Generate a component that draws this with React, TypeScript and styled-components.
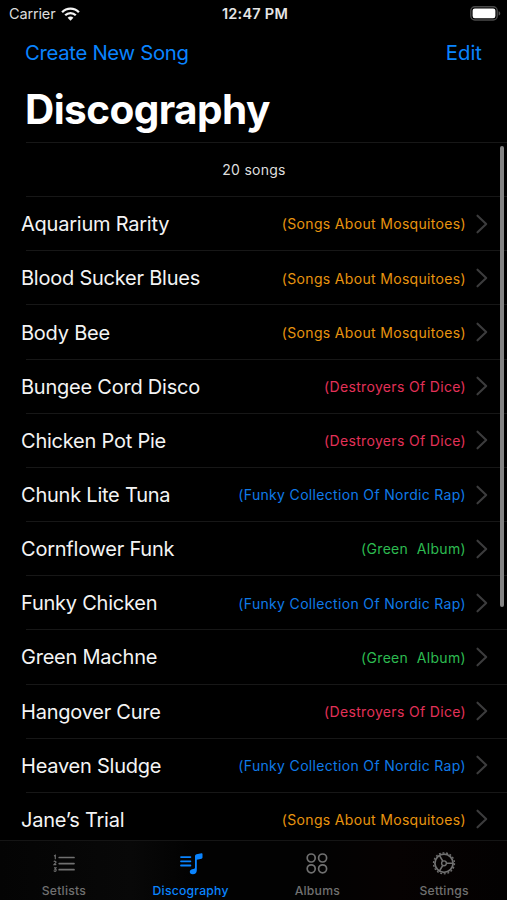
import React from "react";
import styled, { createGlobalStyle } from "styled-components";

const GlobalStyle = createGlobalStyle`
  *, *::before, *::after { box-sizing: border-box; }
  html, body { margin: 0; background: #000; overflow: hidden; }
  button { appearance: none; border: 0; padding: 0; background: none; font: inherit; cursor: pointer; }
`;

const BLUE = "#0a84ff";

const Screen = styled.div`
  position: relative;
  display: flex;
  flex-direction: column;
  width: 507px;
  height: 900px;
  overflow: hidden;
  background: #000;
  color: #f4f4f4;
  font-family: Inter, "Liberation Sans", sans-serif;
  white-space: nowrap;
`;

const StatusBar = styled.div`
  display: grid;
  grid-template-columns: 1fr auto 1fr;
  align-items: center;
  flex: none;
  height: 27px;
  padding: 0 6px 0 9px;
`;

const Carrier = styled.div`
  display: flex;
  align-items: center;
  gap: 6px;
  font-size: 14.5px;
  line-height: 27px;
  letter-spacing: -0.15px;
  color: #dcdcdc;
`;

const Clock = styled.div`
  font-size: 14.5px;
  font-weight: 600;
  line-height: 27px;
  letter-spacing: 0.25px;
  color: #e6e6e6;
`;

const BatterySlot = styled.div`
  display: flex;
  justify-content: flex-end;
`;

const NavBar = styled.nav`
  display: flex;
  justify-content: space-between;
  align-items: center;
  flex: none;
  height: 52px;
  padding: 0 25px 0 25px;
`;

const NavAction = styled.button<{ $tracking: number }>`
  color: ${BLUE};
  font-size: 20.3px;
  line-height: 26px;
  letter-spacing: ${(p) => p.$tracking}px;
`;

const Title = styled.h1`
  flex: none;
  height: 63px;
  margin: 0;
  padding-left: 25px;
  font-size: 40.5px;
  font-weight: 700;
  line-height: 61px;
  letter-spacing: -0.57px;
  color: #fff;
`;

const List = styled.main`
  flex: 1;
  min-height: 0;
  overflow: hidden;
`;

const Item = styled.div`
  display: flex;
  flex-direction: column;
  height: 54.17px;
`;

const Divider = styled.div`
  flex: none;
  height: 1px;
  margin-left: 26px;
  background: #171717;
`;

const Count = styled.div`
  display: flex;
  flex: 1;
  align-items: center;
  justify-content: center;
  padding-left: 1px;
  font-size: 14px;
  letter-spacing: 0.25px;
  color: #dedede;
`;

const Row = styled.div`
  display: flex;
  flex: 1;
  align-items: center;
  padding: 0 19px 0 21px;
`;

const SongName = styled.span`
  flex: 1;
  padding-top: 1px;
  font-size: 20px;
  letter-spacing: -0.23px;
`;

const AlbumName = styled.span<{ $color: string }>`
  margin-right: 10px;
  padding-top: 0.5px;
  font-size: 14px;
  letter-spacing: 0.33px;
  white-space: pre;
  color: ${(p) => p.$color};
`;

const ScrollThumb = styled.div`
  position: absolute;
  top: 146px;
  right: 3px;
  width: 4px;
  height: 461px;
  border-radius: 2px;
  background: #838383;
`;

const TabBar = styled.footer`
  display: grid;
  grid-template-columns: repeat(4, 1fr);
  flex: none;
  height: 60px;
  border-top: 1px solid #151515;
  background: linear-gradient(90deg, #040404 0%, #080808 26%, #020202 38%, #020202 62%, #060202 78%, #030101 100%);
`;

const Tab = styled.button<{ $active: boolean }>`
  display: flex;
  flex-direction: column;
  align-items: center;
  padding: 9px 0 0 1px;
  color: ${(p) => (p.$active ? BLUE : "#707070")};
`;

const TabLabel = styled.span`
  margin-top: 7px;
  font-size: 12.2px;
  font-weight: 500;
  line-height: 16px;
  letter-spacing: 0.22px;
`;

const WifiIcon = () => (
  <svg width="19" height="14" viewBox="0 0 19 14" fill="none" stroke="#f4f4f4" strokeWidth="2.3">
    <path d="M1.1 5.2C5.7.5 13.3.5 17.9 5.2" />
    <path d="M4.2 8.3C7.1 5.4 11.9 5.4 14.8 8.3" />
    <path d="M9.5 13.7 6.6 10.7C8.2 9.2 10.8 9.2 12.4 10.7Z" fill="#f4f4f4" stroke="none" />
  </svg>
);

const BatteryIcon = () => (
  <svg width="31" height="15" viewBox="0 0 31 15">
    <rect x="0.8" y="0.8" width="26.4" height="13.2" rx="4" fill="none" stroke="#4a4a4a" strokeWidth="1.4" />
    <rect x="2.6" y="2.6" width="22.8" height="9.6" rx="2.2" fill="#fff" />
    <path d="M28.6 5.2c2.2.7 2.2 3.7 0 4.4Z" fill="#555" />
  </svg>
);

const Chevron = () => (
  <svg width="12" height="20" viewBox="0 0 12 20" fill="none" stroke="#3c3c3d" strokeWidth="2.1" strokeLinecap="round" strokeLinejoin="round">
    <path d="M1.5 1.7 10.2 10 1.5 18.3" />
  </svg>
);

const SetlistsIcon = () => (
  <svg width="26" height="26" viewBox="0 0 26 26" fill="none" stroke="currentColor">
    <path d="M8.2 7.5H23M8.2 13.6H23M8.2 19.7H23" strokeWidth="1.7" strokeLinecap="round" />
    <path d="M3 6 4.3 5.3V9.2M2.9 11.8C3.3 10.9 5.1 11 5 12.2 4.9 13 3.7 13.5 3 14.6H5.3M3 17.7H5L4 19.1C5.7 19.1 5.4 21.3 4 21.3 3.4 21.3 3 21 2.8 20.6" strokeWidth="1.15" />
  </svg>
);

const DiscographyIcon = () => (
  <svg width="26" height="26" viewBox="0 0 26 26" fill="none" stroke="currentColor">
    <path d="M3 7.1H12.4M3 11.3H12.4M3 15.5H12.4" strokeWidth="1.8" strokeLinecap="round" />
    <path d="M17 6.2C17 5 17.6 4.5 18.6 4.2L23.4 3.2C24.1 3 24.5 3.3 24.5 4V7.4C24.5 8.1 24.2 8.5 23.5 8.7L18.8 9.8V20.2C18.8 22.7 17.3 24.2 14.9 24.3 12.8 24.4 11.6 23.1 11.8 21.6 12 19.8 13.5 19.3 15.4 18.9 16.5 18.7 17 18.4 17 17.4Z" fill="currentColor" stroke="none" />
  </svg>
);

const AlbumsIcon = () => (
  <svg width="26" height="26" viewBox="0 0 26 26" fill="none" stroke="currentColor" strokeWidth="1.7">
    <circle cx="7.2" cy="8" r="4" />
    <circle cx="18.6" cy="8" r="4" />
    <circle cx="7.2" cy="18.8" r="4" />
    <circle cx="18.6" cy="18.8" r="4" />
  </svg>
);

const SettingsIcon = () => (
  <svg width="26" height="26" viewBox="0 0 26 26" fill="none" stroke="currentColor">
    <circle cx="13" cy="13.3" r="9.1" strokeWidth="1.8" />
    <circle cx="13" cy="13.3" r="10.5" strokeWidth="1.3" strokeDasharray="1.9 1.765" />
    <circle cx="13" cy="13.3" r="2.4" strokeWidth="1.4" />
    <path d="M15.4 13.3H22M11.8 11.2 8.4 5.4M11.8 15.4 8.4 21.2" strokeWidth="1.6" />
  </svg>
);

const albums = {
  mosquitoes: { name: "(Songs About Mosquitoes)", color: "#e8940f" },
  dice: { name: "(Destroyers Of Dice)", color: "#e33158" },
  nordic: { name: "(Funky Collection Of Nordic Rap)", color: "#0f7ae8" },
  green: { name: "(Green  Album)", color: "#2dbb51" },
};

const songs: { name: string; album: keyof typeof albums }[] = [
  { name: "Aquarium Rarity", album: "mosquitoes" },
  { name: "Blood Sucker Blues", album: "mosquitoes" },
  { name: "Body Bee", album: "mosquitoes" },
  { name: "Bungee Cord Disco", album: "dice" },
  { name: "Chicken Pot Pie", album: "dice" },
  { name: "Chunk Lite Tuna", album: "nordic" },
  { name: "Cornflower Funk", album: "green" },
  { name: "Funky Chicken", album: "nordic" },
  { name: "Green Machne", album: "green" },
  { name: "Hangover Cure", album: "dice" },
  { name: "Heaven Sludge", album: "nordic" },
  { name: "Jane’s Trial", album: "mosquitoes" },
];

const tabs = [
  { label: "Setlists", Icon: SetlistsIcon },
  { label: "Discography", Icon: DiscographyIcon },
  { label: "Albums", Icon: AlbumsIcon },
  { label: "Settings", Icon: SettingsIcon },
];

export default function App() {
  return (
    <>
      <GlobalStyle />
      <Screen>
        <StatusBar>
          <Carrier>
            Carrier
            <WifiIcon />
          </Carrier>
          <Clock>12:47 PM</Clock>
          <BatterySlot>
            <BatteryIcon />
          </BatterySlot>
        </StatusBar>
        <NavBar>
          <NavAction $tracking={-0.3}>Create New Song</NavAction>
          <NavAction $tracking={0}>Edit</NavAction>
        </NavBar>
        <Title>Discography</Title>
        <List>
          <Item>
            <Divider />
            <Count>20 songs</Count>
          </Item>
          {songs.map((song) => (
            <Item key={song.name}>
              <Divider />
              <Row>
                <SongName>{song.name}</SongName>
                <AlbumName $color={albums[song.album].color}>{albums[song.album].name}</AlbumName>
                <Chevron />
              </Row>
            </Item>
          ))}
        </List>
        <TabBar>
          {tabs.map(({ label, Icon }) => (
            <Tab key={label} $active={label === "Discography"}>
              <Icon />
              <TabLabel>{label}</TabLabel>
            </Tab>
          ))}
        </TabBar>
        <ScrollThumb />
      </Screen>
    </>
  );
}
